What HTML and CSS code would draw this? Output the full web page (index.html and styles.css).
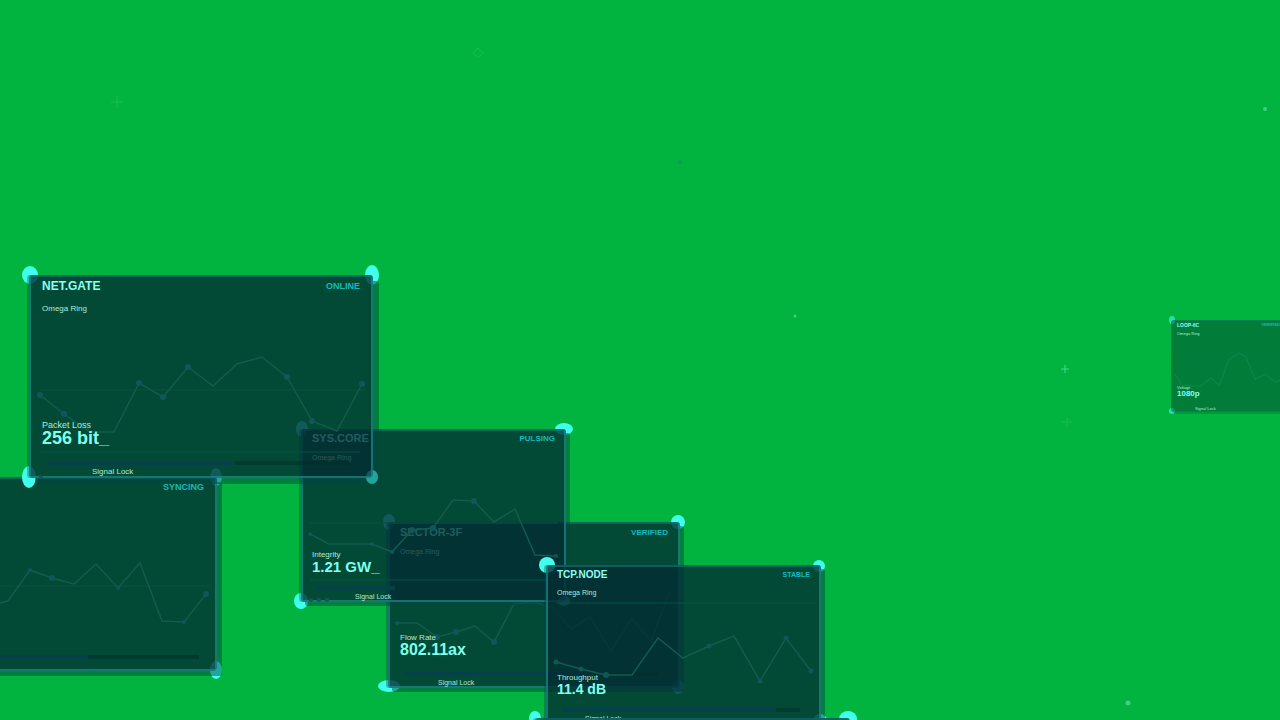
FILE: index.html
```html
<!DOCTYPE html>
<html lang="en">
<head>
    <meta charset="UTF-8">
    <meta name="viewport" content="width=device-width, initial-scale=1.0">
    <title>Network Panels</title>
    <link rel="stylesheet" href="styles.css">
</head>
<body>
    <main class="desktop">
        <!-- floating particles -->
        <svg class="particles" width="1280" height="720" viewBox="0 0 1280 720" aria-hidden="true">
            <path class="faint" d="M111 102h12M117 96v12M478 48l5 5-5 5-5-5z"/>
            <path class="faint bright" d="M1061 369h8M1065 365v8"/>
            <path class="faint" d="M1062 422h10M1067 417v10"/>
            <circle class="blue" cx="680" cy="162" r="2"/>
            <circle cx="795" cy="316" r="1.5"/>
            <circle cx="1265" cy="109" r="2"/>
            <circle cx="1128" cy="703" r="2.5"/>
        </svg>

        <section class="panel panel-sync">
            <svg class="corners" viewBox="-110 477 327 194" aria-hidden="true">
                <ellipse cx="216" cy="477" rx="6" ry="9"/>
                <ellipse cx="216" cy="670" rx="6" ry="9"/>
            </svg>
            <div class="panel-body">
                <svg class="chart" viewBox="-110 477 327 194" aria-hidden="true">
                    <path class="grid" d="M-98 586H210"/>
                    <polyline points="-20,608 0,603 8,601 30,570 52,578 74,584 96,564 118,588 140,563 162,621 184,622 206,594"/>
                    <circle cx="30" cy="570" r="2"/><circle cx="52" cy="578" r="3"/><circle cx="118" cy="588" r="2"/><circle cx="184" cy="622" r="2"/><circle cx="206" cy="594" r="3"/>
                </svg>
                <header><span class="status">SYNCING</span></header>
                <div class="bar"><div class="fill" style="width: 62%"></div></div>
            </div>
        </section>

        <section class="panel panel-sector">
            <svg class="corners" viewBox="388 522 292 166" aria-hidden="true">
                <ellipse cx="389" cy="522" rx="6" ry="8"/>
                <ellipse cx="678" cy="522" rx="7" ry="7"/>
                <ellipse cx="389" cy="686" rx="11" ry="6"/>
                <ellipse cx="678" cy="687" rx="6" ry="7"/>
            </svg>
            <div class="panel-body">
                <svg class="chart" viewBox="388 522 292 166" aria-hidden="true">
                    <path class="grid" d="M398 602H670"/>
                    <polyline points="397,623 417,623 437,637 456,632 475,626 494,642 514,604 534,602 553,608 571,629 590,617 611,651 632,618 651,642 669,593"/>
                    <circle cx="397" cy="623" r="2"/><circle cx="437" cy="637" r="3"/><circle cx="456" cy="632" r="3"/><circle cx="494" cy="642" r="3"/><circle cx="534" cy="602" r="2"/>
                </svg>
                <header><h2>SECTOR-3F</h2><span class="status">VERIFIED</span></header>
                <p class="note">Omega Ring</p>
                <div class="reading">
                    <span class="label">Flow Rate</span>
                    <strong>802.11ax</strong>
                </div>
                <div class="bar"><div class="fill" style="width: 80%"></div></div>
                <footer>Signal Lock</footer>
            </div>
        </section>

        <section class="panel panel-core">
            <svg class="corners" viewBox="301 429 265 173" aria-hidden="true">
                <ellipse cx="302" cy="429" rx="6" ry="8"/>
                <ellipse cx="564" cy="429" rx="9" ry="6"/>
                <ellipse cx="301" cy="601" rx="7" ry="8"/>
                <ellipse cx="564" cy="601" rx="6" ry="5"/>
            </svg>
            <div class="panel-body">
                <svg class="chart" viewBox="301 429 265 173" aria-hidden="true">
                    <path class="grid" d="M310 452H360M310 523H558M310 580H558"/>
                    <polyline points="310,534 329,544 372,544 392,552 412,530 433,528 453,500 474,501 494,522 515,509 535,555 556,556"/>
                    <circle cx="310" cy="534" r="2"/><circle cx="372" cy="544" r="2"/><circle cx="392" cy="552" r="2"/><circle cx="412" cy="530" r="3"/><circle cx="433" cy="528" r="3"/><circle cx="474" cy="501" r="3"/><circle cx="556" cy="556" r="2"/>
                    <circle cx="311" cy="600" r="2"/><circle cx="319" cy="600" r="2"/><circle cx="327" cy="600" r="2"/>
                </svg>
                <header><h2>SYS.CORE</h2><span class="status">PULSING</span></header>
                <p class="note">Omega Ring</p>
                <div class="reading">
                    <span class="label">Integrity</span>
                    <strong>1.21 GW_</strong>
                </div>
                <div class="bar short"><div class="fill" style="width: 100%"></div></div>
                <footer>Signal Lock</footer>
            </div>
        </section>

        <section class="panel panel-gate">
            <svg class="corners" viewBox="29 275 344 203" aria-hidden="true">
                <ellipse cx="30" cy="275" rx="8" ry="9"/>
                <ellipse cx="372" cy="275" rx="7" ry="10"/>
                <ellipse cx="29" cy="477" rx="7" ry="11"/>
                <ellipse cx="372" cy="477" rx="6" ry="7"/>
            </svg>
            <div class="panel-body">
                <svg class="chart" viewBox="29 275 344 203" aria-hidden="true">
                    <path class="grid" d="M40 390H366M40 452H360"/>
                    <polyline points="40,395 64,414 90,432 114,432 139,383 163,397 188,367 213,386 237,364 262,357 287,377 312,421 337,431 362,384"/>
                    <circle cx="40" cy="395" r="3"/><circle cx="64" cy="414" r="3"/><circle cx="139" cy="383" r="3"/><circle cx="163" cy="397" r="3"/><circle cx="188" cy="367" r="3"/><circle cx="287" cy="377" r="3"/><circle cx="312" cy="421" r="3"/><circle cx="362" cy="384" r="3"/>
                    <circle cx="41" cy="477" r="2"/>
                </svg>
                <header><h2>NET.GATE</h2><span class="status">ONLINE</span></header>
                <p class="note">Omega Ring</p>
                <div class="reading">
                    <span class="label">Packet Loss</span>
                    <strong>256 bit_</strong>
                </div>
                <div class="bar"><div class="fill" style="width: 62%"></div></div>
                <footer>Signal Lock</footer>
            </div>
        </section>

        <section class="panel panel-tcp">
            <svg class="corners" viewBox="546 565 275 159" aria-hidden="true">
                <ellipse cx="547" cy="565" rx="8" ry="8"/>
                <ellipse cx="819" cy="566" rx="6" ry="6"/>
                <ellipse cx="820" cy="721" rx="7" ry="7"/>
            </svg>
            <div class="panel-body">
                <svg class="chart" viewBox="546 565 275 159" aria-hidden="true">
                    <path class="grid" d="M556 603H816"/>
                    <polyline points="556,662 581,669 606,675 632,675 658,638 683,658 709,646 734,636 760,681 786,638 811,671"/>
                    <circle cx="556" cy="662" r="2.5"/><circle cx="581" cy="669" r="2.5"/><circle cx="606" cy="675" r="3"/><circle cx="709" cy="646" r="2.5"/><circle cx="760" cy="681" r="2.5"/><circle cx="786" cy="638" r="2.5"/><circle cx="811" cy="671" r="2.5"/>
                </svg>
                <header><h2>TCP.NODE</h2><span class="status">STABLE</span></header>
                <p class="note">Omega Ring</p>
                <div class="reading">
                    <span class="label">Throughput</span>
                    <strong>11.4 dB</strong>
                </div>
                <div class="bar"><div class="fill" style="width: 90%"></div></div>
                <footer>Signal Lock</footer>
            </div>
        </section>

        <section class="panel panel-loop">
            <svg class="corners" viewBox="1171 320 155 92" aria-hidden="true">
                <ellipse cx="1172" cy="320" rx="3" ry="4"/>
                <ellipse cx="1172" cy="411" rx="3" ry="3"/>
            </svg>
            <div class="panel-body">
                <svg class="chart" viewBox="1171 320 155 92" aria-hidden="true">
                    <path class="grid" d="M1176 353H1320"/>
                    <polyline points="1176,374 1183,385 1201,386 1211,378 1220,385 1229,360 1239,353 1246,357 1255,379 1265,374 1275,382 1285,378"/>
                </svg>
                <header><h2>LOOP-6C</h2><span class="status">VERIFIED</span></header>
                <p class="note">Omega Ring</p>
                <div class="reading">
                    <span class="label">Voltage</span>
                    <strong>1080p</strong>
                </div>
                <footer>Signal Lock</footer>
            </div>
        </section>

        <!-- panel rising from below the fold -->
        <section class="panel panel-next">
            <svg class="corners" viewBox="535 718 315 180" aria-hidden="true">
                <ellipse cx="535" cy="718" rx="6" ry="7"/>
                <ellipse cx="848" cy="719" rx="9" ry="8"/>
            </svg>
            <div class="panel-body"></div>
        </section>
    </main>
</body>
</html>
```
FILE: styles.css
```css
* {
    box-sizing: border-box;
}
body {
    margin: 0;
    background-color: #00b43f;
    font-family: "Liberation Sans", Arial, sans-serif;
    color: #b0ebdc;
}
.desktop {
    position: relative;
    height: 100vh;
    overflow: hidden;
}
.particles {
    position: absolute;
    left: 0;
    top: 0;
    fill: #40d07c;
}
.particles .faint {
    fill: none;
    stroke: #1abd55;
    stroke-width: 1;
}
.particles .bright {
    stroke: #3fd98e;
}
.particles .blue {
    fill: #089d6a;
}

/* panels float freely on the canvas */
.panel {
    position: absolute;
    isolation: isolate;
    display: flex;
    --title: 11px;
    --status: 8px;
    --small: 7px;
    --label: 8px;
    --value: 16px;
    --pad: 9px;
    --head: 14px;
    --gap: 12px;
    --indent: 52px;
    --shadow: 4px;
}
.panel-body {
    position: relative;
    isolation: isolate;
    flex: 1;
    display: flex;
    flex-direction: column;
    padding: 0 var(--pad);
    border: 2px solid rgba(32, 140, 142, 0.7);
    border-top-color: rgba(24, 122, 122, 0.6);
    border-radius: 3px;
    background-color: rgba(3, 43, 51, 0.78);
    box-shadow: var(--shadow) var(--shadow) 0 rgba(2, 70, 65, 0.48), -2px 0 0 rgba(2, 70, 65, 0.35);
}
.corners,
.chart {
    position: absolute;
    overflow: visible;
}
.corners {
    inset: 0;
    width: 100%;
    height: 100%;
    fill: #40ffec;
}
.chart {
    left: -2px;
    top: -2px;
    width: calc(100% + 4px);
    height: calc(100% + 4px);
    fill: #10575a;
    z-index: -1;
}
.chart polyline {
    fill: none;
    stroke: #115c4d;
    stroke-width: 1.5;
}
.chart .grid {
    stroke: #07523f;
}
header {
    display: flex;
    justify-content: space-between;
    align-items: center;
    height: var(--head);
}
h2 {
    margin: 0;
    font-size: var(--title);
    color: #8cfff0;
}
.status {
    margin-left: auto;
    font-size: var(--status);
    font-weight: bold;
    color: #17b9bd;
}
.note {
    margin: 7px 0 0;
    font-size: var(--small);
    line-height: 10px;
}
.reading {
    display: flex;
    flex-direction: column;
    margin-top: auto;
}
.label {
    font-size: var(--label);
    line-height: 8px;
}
.reading strong {
    font-size: var(--value);
    line-height: var(--value);
    color: #80ffef;
}
.bar {
    height: 4px;
    margin: var(--gap) 10px 3px 5px;
    background-color: rgba(0, 43, 40, 0.5);
}
.bar.short {
    width: 78px;
}
.fill {
    height: 100%;
    background-color: #04414a;
}
footer {
    padding-left: var(--indent);
    font-size: var(--small);
    line-height: var(--small);
    white-space: nowrap;
}

.panel-gate {
    left: 29px;
    top: 275px;
    width: 344px;
    height: 203px;
    --title: 12px;
    --status: 9px;
    --small: 8px;
    --label: 9px;
    --value: 18px;
    --pad: 11px;
    --head: 18px;
    --gap: 14px;
    --indent: 50px;
    --shadow: 6px;
}
.panel-gate .note {
    margin-top: 9px;
}
.panel-core {
    left: 301px;
    top: 429px;
    width: 265px;
    height: 173px;
    --value: 15px;
    --indent: 43px;
}
.panel-core .note {
    margin-top: 8px;
}
.panel-sector {
    left: 388px;
    top: 522px;
    width: 292px;
    height: 166px;
    --pad: 10px;
    --head: 16px;
    --gap: 14px;
    --indent: 38px;
}
.panel-tcp {
    left: 546px;
    top: 565px;
    width: 275px;
    height: 159px;
    --title: 10px;
    --status: 7px;
    --value: 14px;
    --indent: 28px;
}
.panel-sync {
    left: -110px;
    top: 477px;
    width: 327px;
    height: 194px;
    --status: 9px;
    --pad: 11px;
    --head: 16px;
    --shadow: 5px;
}
.panel-sync .bar {
    margin: auto 5px 10px;
}
.panel-loop {
    left: 1171px;
    top: 320px;
    width: 155px;
    height: 92px;
    --title: 5px;
    --status: 4px;
    --small: 4px;
    --label: 4px;
    --value: 8px;
    --pad: 5px;
    --head: 7px;
    --indent: 18px;
}
.panel-loop .corners {
    opacity: 0.6;
}
.panel-loop .panel-body {
    padding-right: 45px;
    border: 1px solid rgba(28, 128, 132, 0.35);
    background-color: rgba(3, 43, 51, 0.4);
    box-shadow: 2px 2px 0 rgba(2, 70, 65, 0.25);
}
.panel-loop .chart polyline {
    stroke: #0b8448;
}
.panel-loop .chart .grid {
    stroke: #047e40;
}
.panel-loop .note {
    margin-top: 1px;
}
.panel-loop .label {
    line-height: 4px;
}
.panel-loop .reading {
    margin-bottom: 9px;
}
.panel-next {
    left: 535px;
    top: 718px;
    width: 315px;
    height: 180px;
}
```
